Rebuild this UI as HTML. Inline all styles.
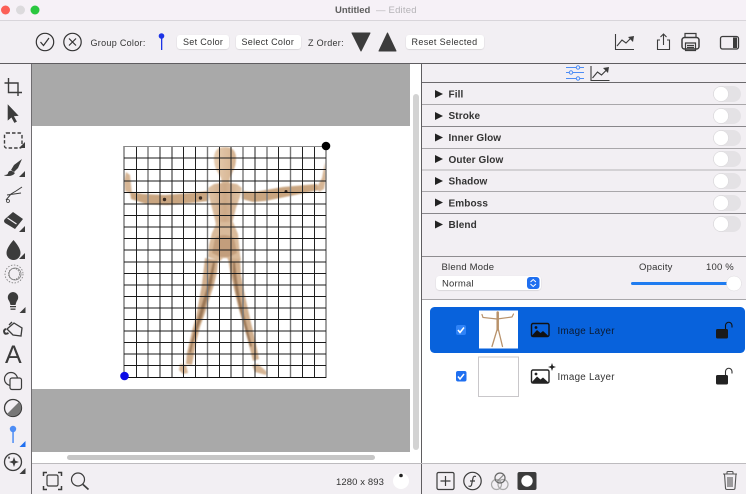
<!DOCTYPE html>
<html><head><meta charset="utf-8"><style>
html,body{margin:0;padding:0;width:746px;height:494px;overflow:hidden;background:#f2eff3}
svg{display:block;font-family:"Liberation Sans",sans-serif;filter:blur(.35px)}
text{fill:#333}
</style></head><body>
<svg width="746" height="494" viewBox="0 0 746 494" xmlns="http://www.w3.org/2000/svg">
<defs><filter id="b" x="-10%" y="-10%" width="120%" height="120%"><feGaussianBlur stdDeviation="0.7"/></filter>
<filter id="sh" x="-10%" y="-20%" width="120%" height="150%"><feDropShadow dx="0" dy=".5" stdDeviation=".5" flood-color="#000" flood-opacity=".18"/></filter>
<linearGradient id="t" x1="0" x2="1"><stop offset="0" stop-color="#e0c4a6"/><stop offset=".5" stop-color="#cda987"/><stop offset="1" stop-color="#e0c4a6"/></linearGradient>
<linearGradient id="h" x1="0" x2="1"><stop offset="0" stop-color="#e6ccb0"/><stop offset="1" stop-color="#d4b18e"/></linearGradient></defs>
<rect width="746" height="494" fill="#f2eff3"/>
<rect width="746" height="20" fill="#f6f1f7"/>
<rect y="20" width="746" height="1" fill="#d8d5da"/>
<circle cx="5.500" cy="10" r="4.500" fill="#fc5f57"/><circle cx="20.500" cy="10" r="4.500" fill="#dcdadd"/><circle cx="35" cy="10" r="4.500" fill="#29c73f"/>
<text x="335" y="13" font-size="9.500" font-weight="bold" style="fill:#5e5e5e">Untitled</text>
<text x="376" y="13" font-size="9.500" letter-spacing=".2" style="fill:#b5b3b7">— Edited</text>

<!-- toolbar -->
<g fill="none" stroke="#333" stroke-width="1.200">
<circle cx="45" cy="42" r="8.700"/><path d="M40.500 42l3 3.500 5.500-7.500"/>
<circle cx="72.500" cy="42" r="8.700"/><path d="M69 38.500l7 7M76 38.500l-7 7"/></g>
<text x="90.500" y="46" font-size="9" letter-spacing=".3">Group Color:</text>
<circle cx="161.500" cy="36" r="2.800" fill="#1c33e6"/><rect x="161" y="36" width="1.300" height="14" fill="#1c33e6"/>
<g filter="url(#sh)"><rect x="177" y="35" width="52" height="14" rx="3" fill="#fff"/><rect x="236" y="35" width="65" height="14" rx="3" fill="#fff"/><rect x="406" y="35" width="78" height="14" rx="3" fill="#fff"/></g>
<text x="183" y="45" font-size="9" letter-spacing=".3">Set Color</text><text x="241.500" y="45" font-size="9" letter-spacing=".3">Select Color</text>
<text x="411.500" y="45" font-size="9" letter-spacing=".35">Reset Selected</text>
<text x="308" y="46" font-size="9" letter-spacing=".3">Z Order:</text>
<path d="M352 33h18l-9 18z" fill="#3c3c3c" stroke="#3c3c3c" stroke-linejoin="round"/><path d="M379 51h17l-8.500-18z" fill="#3c3c3c" stroke="#3c3c3c" stroke-linejoin="round"/>
<g fill="none" stroke="#3c3c3c" stroke-width="1.100"><path d="M615.500 34v15.500h18.500M617 46l5-6 4 3 5-5"/>
<path d="M660 40h-2.500v9.500h12V40H667M663.500 45V34M660.500 37l3-3 3 3"/>
<rect x="682" y="37.500" width="17" height="11.500" rx="2.500" stroke-width="1.500"/><path d="M685 37v-3.500h11V37M685.500 43h10v7.500h-10zM687 45.500h7M687 47.500h7" stroke-width="1.200"/>
<rect x="720.500" y="36.500" width="18" height="12.500" rx="2" stroke-width="1.300"/></g>
<path d="M628 37l6-1-1 6z" fill="#3c3c3c"/>
<rect x="733" y="37.500" width="4" height="10.500" fill="#3c3c3c"/>
<rect y="63" width="746" height="1" fill="#5f5d60"/>

<!-- canvas -->
<rect x="32" y="64" width="390" height="399" fill="#fff"/>
<rect x="32" y="64" width="378" height="62" fill="#a9a9a9"/>
<rect x="32" y="389" width="378" height="63" fill="#a9a9a9"/>
<rect x="413" y="94" width="6" height="356" rx="3" fill="#d3d3d3"/>
<rect x="67" y="455" width="308" height="5" rx="2.500" fill="#c6c6c6"/>
<rect x="31" y="64" width="1" height="430" fill="#6f6d70"/>
<rect x="421" y="64" width="1" height="430" fill="#5f5d60"/>

<!-- figure -->
<g filter="url(#b)">
<path d="M219 148q6-2 12 0 5 3 5 10 0 8-3 13l-3 7-1 7h-7l-1-7-4-7q-3-5-3-13 0-7 5-10z" fill="url(#h)"/>
<path d="M208 188l6-4 7-1h9l7 1 5 4-2 9-4 11-3 12-1 5 4 9 2 12 2 10-32 0 2-10 2-12 4-9-1-5-3-12-3-11z" fill="url(#t)"/>
<path d="M217 222h16l5 12 2 21 1 5-10 4-4-6h-4l-3 3-12-4 1-12 3-12z" fill="#d9ba9a"/>
<path d="M215 238q9-6 19 0l3 15-8 4h-9l-8-4z" fill="#c29e7b"/>
<path d="M130 192l13 2 22 1 26-2 17-2v10l-17 2-24 2-21-1-15-5z" fill="#c9a580"/>
<path d="M242 191l12 1 29-5 34-3 2 6-24 5-30 6-12 1-11-3z" fill="#c9a580"/>
<path d="M126 172l4 3 2 19-7-3-1-10z" fill="#d6b594"/>
<path d="M325 162l1 16-2 11-5 3-2-5 5-9z" fill="#d6b594"/>
<path d="M205 258l13 2-1 12-3 13-6 18-3 10-5 14-4 16-4 22-6-1 1-11 5-22 4-14 3-16 3-17z" fill="#d0ae8c"/>
<path d="M213 262l2 1-3 20-6 20-4 14-5 14-4 12-2 10-2-1 3-13 5-18 4-14 6-20z" fill="#9c7857"/>
<path d="M228 258l12 1 1 16 3 16 3 14 4 18 4 16 4 20-6 2-5-20-5-18-5-17-4-17-4-18z" fill="#d0ae8c"/>
<path d="M233 262l2 0 2 18 3 18 5 20 4 16 3 12-2 1-5-18-5-18-4-18-3-18z" fill="#9c7857"/>
<path d="M180 364l6 1 2 8-5 1-4-4z" fill="#d6b594"/>
<path d="M252 365l6-1 9 8-1 3-11-3z" fill="#d6b594"/>
</g>
<g fill="#3a2a20"><circle cx="164.500" cy="199.500" r="1.700"/><circle cx="200.500" cy="198" r="1.700"/><circle cx="286" cy="191.500" r="1.500"/></g>
<!-- grid -->
<g fill="none">
<path d="M124 146V378M148 146V378M207.500 146V378M243 146V378M267 146V378M290.500 146V378M326 146V378" stroke="#777" stroke-width="1.400"/>
<path d="M136.500 146V378M160 146V378M172 146V378M183.500 146V378M195.500 146V378M219.500 146V378M231 146V378M255 146V378M278.500 146V378M302.500 146V378M314.500 146V378" stroke="#222" stroke-width="1"/>
<path d="M124 158H326M124 169.500H326M124 181H326M124 204H326M124 215.500H326M124 227H326M124 238.500H326M124 250H326M124 262H326M124 273.500H326M124 285H326M124 296.500H326M124 308H326M124 319.500H326M124 331H326M124 342.500H326M124 354H326M124 365.500H326" stroke="#1a1a1a" stroke-width="1"/>
<path d="M124 192.500H326M124 377.500H326" stroke="#111" stroke-width="1"/>
<path d="M124 146.500H326" stroke="#888" stroke-width="1"/>
</g>
<circle cx="326" cy="146" r="4.300" fill="#000"/>
<circle cx="124.500" cy="376" r="4.300" fill="#0c0ce6"/>

<!-- left tools -->
<g fill="none" stroke="#3c3c3c" stroke-width="1.400">
<path d="M8.500 78v14.500h13.500M4.500 83H18v13"/>
<path d="M8 105l0 15 3.500-3 3 5.500 2-1-3-5.500 4.500-.5z" fill="#3c3c3c" stroke-width=".6"/>
<rect x="4.500" y="133" width="17.500" height="15" rx="2" stroke-dasharray="3.500 2"/>
<path d="M6 200l5-6 5-3 6-4M7 195l7-1 7-1" stroke-width="1"/><circle cx="8" cy="201" r="1.500" stroke-width=".8"/>
</g>
<path d="M22 159l-4 9-4 4-3-2 3-5zM12 171l3 2q-2 3-7 3-3 0-4-1 4 0 4-2 1-3 4-2z" fill="#3c3c3c"/>
<path d="M13 212l10 7-8 10-10-6q-2-2 0-4z" fill="#3c3c3c"/><path d="M16.500 224l-9-6" stroke="#f2eff3" stroke-width="1.100"/>
<path d="M13.500 240q7 8 7 13a7 7 0 0 1-14 0q0-5 7-13z" fill="#3c3c3c"/>
<g fill="none" stroke="#777" stroke-width=".8"><circle cx="14" cy="274" r="5.500" stroke-dasharray="1.500 1"/><circle cx="14" cy="274" r="9" stroke-dasharray="1.500 1.500"/><circle cx="15" cy="274" r="6"/></g>
<path d="M13 292a5.500 5.500 0 0 1 5 7q-2 3-2.500 6h-5q-.5-3-2.500-6a5.500 5.500 0 0 1 5-7z" fill="#3c3c3c"/><rect x="10" y="306" width="6" height="1.300" fill="#3c3c3c"/><rect x="10.500" y="308.500" width="5" height="1.300" fill="#3c3c3c"/>
<g fill="none" stroke="#3c3c3c" stroke-width="1.300"><path d="M7 329l7-6 8 5-1 8-8-1z"/><path d="M4.500 332q0 3 4 1M6 329q-3 1-1.500 4" stroke-width="2"/><path d="M12 322l-3 3"/></g>
<text x="5" y="363" font-size="25" style="fill:#3c3c3c">A</text>
<g fill="none" stroke="#3c3c3c" stroke-width="1.200"><circle cx="11" cy="379" r="6.500"/><rect x="10" y="378" width="11.500" height="11.500" rx="2" fill="#f2eff3"/></g>
<circle cx="13" cy="408" r="8.500" fill="none" stroke="#3c3c3c" stroke-width="1.300"/><path d="M19 402a8.500 8.500 0 0 1-12 12z" fill="#777"/>
<circle cx="13" cy="429" r="3.200" fill="#4d8df5"/><rect x="12.300" y="431" width="1.500" height="12" fill="#4d8df5"/>
<circle cx="13" cy="462" r="8.500" fill="none" stroke="#3c3c3c" stroke-width="1.300"/><path d="M14 457l1.300 3.700 3.700 1.300-3.700 1.300-1.300 3.700-1.300-3.700-3.700-1.300 3.700-1.300z" fill="#3c3c3c"/><path d="M9 456l1 2-1 1-1-1z" fill="#3c3c3c"/>
<g fill="#3c3c3c"><path d="M25 148h-6l6-6z"/><path d="M25 177h-6l6-6z"/><path d="M25 232h-6l6-6z"/><path d="M25 259h-6l6-6z"/><path d="M25.500 313h-6l6-6z"/><path d="M25.500 474h-6l6-6z"/></g>
<path d="M25.500 447h-6l6-6z" fill="#1f6ff0"/>

<!-- bottom status -->
<rect x="32" y="463" width="714" height="1" fill="#bdbbbe"/>
<g fill="none" stroke="#3c3c3c" stroke-width="1.200"><rect x="47" y="475" width="11" height="11" rx="1.500"/><path d="M43.500 476v-3.500h3.500M58 472.500h3.500v3.500M61.500 486v3.500H58M47 489.500h-3.500V486" stroke-width="1.500"/>
<circle cx="78" cy="479.500" r="6.500"/><path d="M83 484.500l5.500 5" stroke-width="1.700"/></g>
<text x="336" y="485" font-size="9.500" letter-spacing=".1">1280 x 893</text>
<circle cx="401" cy="481" r="8" fill="#fff"/><circle cx="401" cy="475.500" r="1.800" fill="#222"/>

<!-- right panel -->
<rect x="422" y="64" width="324" height="236" fill="#f2eff3"/>
<g stroke="#4d8df5" stroke-width="1" fill="#f2eff3"><path d="M566 67.500h18M566 72.500h18M566 78.500h18"/><circle cx="578" cy="67.500" r="1.700"/><circle cx="571" cy="72.500" r="1.700"/><circle cx="578" cy="78.500" r="1.700"/></g>
<g fill="none" stroke="#3c3c3c" stroke-width="1.100"><path d="M591 66v14.500h18.500M592.500 78l5-6 4 3 5-5"/></g><path d="M603 68l6-1-1 6z" fill="#3c3c3c"/>
<g fill="#a9a7aa">
<rect x="422" y="82" width="324" height="1" fill="#6b696c"/><rect x="422" y="104" width="324" height="1"/><rect x="422" y="126" width="324" height="1" fill="#88868a"/><rect x="422" y="148" width="324" height="1"/><rect x="422" y="169" width="324" height="2" fill="#d3d1d4"/><rect x="422" y="191" width="324" height="1"/><rect x="422" y="213" width="324" height="1" fill="#88868a"/><rect x="422" y="256" width="324" height="1" fill="#8f8d90"/>
</g>
<g fill="#222"><path d="M435 90v8l8-4z"/><path d="M435 112v8l8-4z"/><path d="M435 133.500v8l8-4z"/><path d="M435 155v8l8-4z"/><path d="M435 177v8l8-4z"/><path d="M435 198.500v8l8-4z"/><path d="M435 220.500v8l8-4z"/></g>
<g font-size="10" font-weight="bold" letter-spacing=".1"><text x="448.500" y="97.500">Fill</text><text x="448.500" y="119">Stroke</text><text x="448.500" y="141">Inner Glow</text><text x="448.500" y="163">Outer Glow</text><text x="448.500" y="184.500">Shadow</text><text x="448.500" y="206.500">Emboss</text><text x="448.500" y="228">Blend</text></g>
<g fill="#e4e2e5"><rect x="713" y="86" width="28" height="16" rx="8"/><rect x="713" y="108" width="28" height="16" rx="8"/><rect x="713" y="130" width="28" height="16" rx="8"/><rect x="713" y="151" width="28" height="16" rx="8"/><rect x="713" y="173" width="28" height="16" rx="8"/><rect x="713" y="195" width="28" height="16" rx="8"/><rect x="713" y="216" width="28" height="16" rx="8"/></g>
<g fill="#fff" stroke="#d6d4d7" stroke-width=".5"><circle cx="721" cy="94" r="7.500"/><circle cx="721" cy="116" r="7.500"/><circle cx="721" cy="138" r="7.500"/><circle cx="721" cy="159" r="7.500"/><circle cx="721" cy="181" r="7.500"/><circle cx="721" cy="203" r="7.500"/><circle cx="721" cy="224" r="7.500"/></g>
<text x="441.500" y="270" font-size="9.500" letter-spacing=".2">Blend Mode</text>
<rect x="436" y="276" width="105" height="14" rx="3.500" fill="#fff" filter="url(#sh)"/>
<text x="442" y="286.500" font-size="9.500" letter-spacing=".2">Normal</text>
<rect x="527" y="277" width="12.500" height="12" rx="3" fill="#1f6ff0"/><path d="M530.500 282l2.700-2.500 2.700 2.500M530.500 284l2.700 2.500 2.700-2.500" fill="none" stroke="#fff"/>
<text x="639" y="270" font-size="9.500" letter-spacing=".2">Opacity</text><text x="706" y="270" font-size="9.500" letter-spacing=".2">100 %</text>
<rect x="631" y="282" width="100" height="3" rx="1.500" fill="#1f7cf0"/><circle cx="734" cy="283.500" r="7.500" fill="#fff" stroke="#dddbde" stroke-width=".5"/>
<rect x="422" y="299" width="324" height="1" fill="#a9a7aa"/>

<!-- layers -->
<rect x="422" y="300" width="324" height="163" fill="#fff"/>
<rect x="430" y="307" width="315" height="46" rx="4.500" fill="#0862dc"/>
<rect x="456" y="325" width="10" height="10" rx="2" fill="#2f83f7"/><path d="M458 330l2 2.500 4-5" fill="none" stroke="#fff" stroke-width="1.500"/>
<rect x="456" y="371" width="10.500" height="10.500" rx="2" fill="#1f6ff0"/><path d="M458 376.500l2 2.500 4-5" fill="none" stroke="#fff" stroke-width="1.500"/>
<rect x="479" y="310.500" width="39" height="38" fill="#fff"/>
<g fill="none" stroke="#b8926b" stroke-linecap="round"><path d="M482 314.500l1 3 14 1.500 15-2 1.500-3" stroke-width="1.200"/><path d="M497.700 312.500v17" stroke-width="2.500"/><path d="M497 330l-5 16.500M498.500 330l4 16.500" stroke-width="1.300"/></g>
<rect x="478.500" y="357" width="40" height="39.500" fill="#fff" stroke="#c9c7ca"/>
<g><rect x="531.500" y="323.500" width="17.500" height="13" rx="1.500" fill="#0862dc" stroke="#111" stroke-width="1.400"/><path d="M531.500 336l5.500-6 3.500 3 2.500-2 5.500 5v1h-17z" fill="#111"/><circle cx="536" cy="327.500" r="1.400" fill="#111"/>
<rect x="531.500" y="370" width="17.500" height="13" rx="1.500" fill="#fff" stroke="#222" stroke-width="1.400"/><path d="M531.500 382.500l5.500-6 3.500 3 2.500-2 5.500 5v1h-17z" fill="#222"/><circle cx="536" cy="374" r="1.400" fill="#222"/>
<path d="M552 363l1 3 3 1-3 1-1 3-1-3-3-1 3-1z" fill="#222"/></g>
<text x="557.500" y="334" font-size="9.800" letter-spacing=".25" style="fill:#0c1a30">Image Layer</text>
<text x="557.500" y="380" font-size="9.800" letter-spacing=".25">Image Layer</text>
<g fill="#1a1a1a"><rect x="716" y="329" width="12" height="9.500" rx="1.500"/><rect x="716" y="375" width="12" height="9.500" rx="1.500" fill="#222"/></g>
<g fill="none" stroke-width="1.100"><path d="M725.500 329v-3.500a3.200 3.200 0 0 1 6.500 0v2" stroke="#111"/><path d="M725.500 375v-3.500a3.200 3.200 0 0 1 6.500 0v2" stroke="#333"/></g>

<!-- bottom right -->
<g fill="none" stroke="#3c3c3c" stroke-width="1.200"><rect x="437" y="472.500" width="17" height="17" rx="1.500"/><path d="M445.500 476v10M440.500 481h10"/>
<circle cx="472.500" cy="481" r="8.700"/><path d="M476 476.500q-2.500-1-3 1.500l-1.500 7q-.5 2-3 1M470 481h5"/>
<g stroke="#aaa"><circle cx="496.500" cy="484.500" r="5"/><circle cx="503" cy="484.500" r="5"/></g><circle cx="500" cy="478" r="5" stroke="#666"/><path d="M496.500 482l7-7" stroke="#888"/></g>
<rect x="517.500" y="472" width="19" height="18" rx="2" fill="#3c3c3c"/><circle cx="527" cy="481" r="5.700" fill="#fff"/>
<g fill="none" stroke="#555" stroke-width="1.100"><path d="M723 474h14M727 474v-1.500q0-1 1-1h4q1 0 1 1v1M724.500 474l1 14q0 1.500 1.500 1.500h6.500q1.500 0 1.500-1.500l1-14M728 477v10M730 477v10M732 477v10"/></g>
</svg>
</body></html>
